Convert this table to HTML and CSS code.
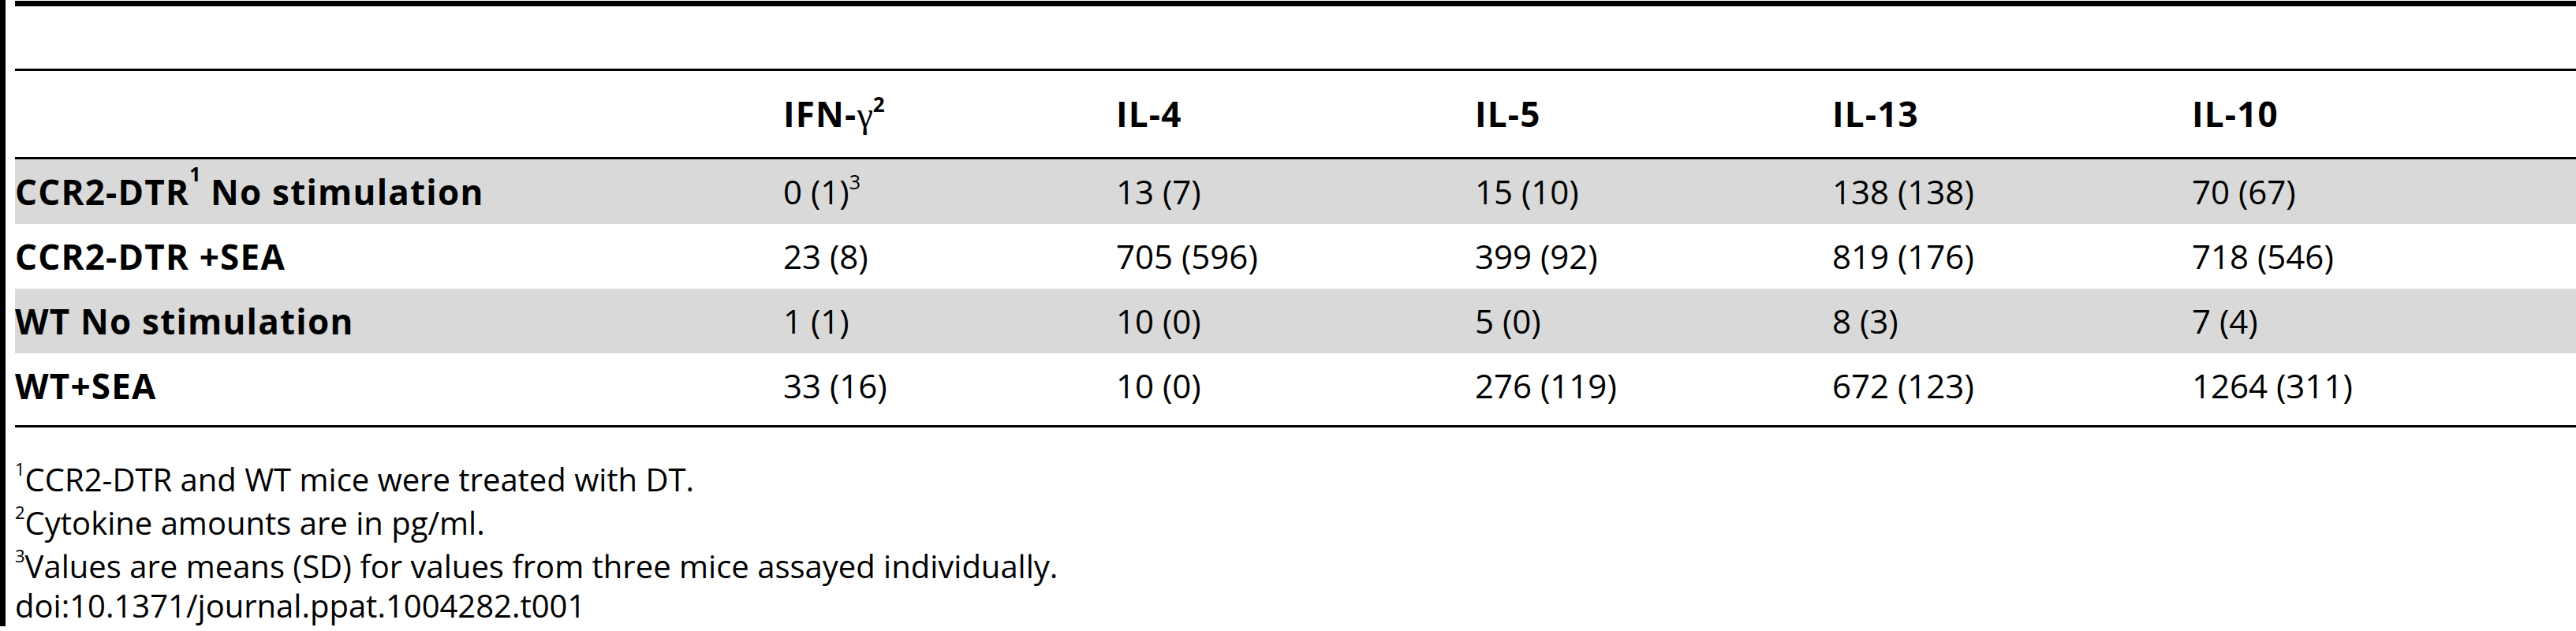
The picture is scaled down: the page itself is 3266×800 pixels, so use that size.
FILE: index.html
```html
<!DOCTYPE html>
<html lang="en">
<head>
<meta charset="utf-8">
<title>Table 1</title>
<link rel="stylesheet" href="styles.css">
</head>
<body>
<div class="frame">
  <div class="sheet">
    <div class="rule-top"></div>
    <div class="table">
      <div class="row head">
        <div class="cell"></div>
        <div class="cell">IFN-<span class="greek">γ</span><sup class="sup-head">2</sup></div>
        <div class="cell">IL-4</div>
        <div class="cell">IL-5</div>
        <div class="cell">IL-13</div>
        <div class="cell">IL-10</div>
      </div>
      <div class="row shade">
        <div class="cell lbl">CCR2-DTR<sup class="sup-lbl">1</sup> No stimulation</div>
        <div class="cell">0 (1)<sup class="sup-val">3</sup></div>
        <div class="cell">13 (7)</div>
        <div class="cell">15 (10)</div>
        <div class="cell">138 (138)</div>
        <div class="cell">70 (67)</div>
      </div>
      <div class="row">
        <div class="cell lbl">CCR2-DTR +SEA</div>
        <div class="cell">23 (8)</div>
        <div class="cell">705 (596)</div>
        <div class="cell">399 (92)</div>
        <div class="cell">819 (176)</div>
        <div class="cell">718 (546)</div>
      </div>
      <div class="row shade">
        <div class="cell lbl">WT No stimulation</div>
        <div class="cell">1 (1)</div>
        <div class="cell">10 (0)</div>
        <div class="cell">5 (0)</div>
        <div class="cell">8 (3)</div>
        <div class="cell">7 (4)</div>
      </div>
      <div class="row">
        <div class="cell lbl">WT+SEA</div>
        <div class="cell">33 (16)</div>
        <div class="cell">10 (0)</div>
        <div class="cell">276 (119)</div>
        <div class="cell">672 (123)</div>
        <div class="cell">1264 (311)</div>
      </div>
    </div>
    <div class="notes">
      <p class="note"><sup class="sup-note">1</sup>CCR2-DTR and WT mice were treated with DT.</p>
      <p class="note"><sup class="sup-note">2</sup>Cytokine amounts are in pg/ml.</p>
      <p class="note"><sup class="sup-note">3</sup>Values are means (SD) for values from three mice assayed individually.</p>
      <p class="note doi">doi:10.1371/journal.ppat.1004282.t001</p>
    </div>
  </div>
</div>
</body>
</html>
```

FILE: styles.css
```css
html, body {
  margin: 0;
  padding: 0;
  background: #ffffff;
}

body {
  font-family: "Open Sans", "Noto Sans", "DejaVu Sans", sans-serif;
  color: #000000;
  width: 3266px;
}

.frame {
  display: flex;
  box-sizing: border-box;
  height: 794px;
  border-left: 7px solid #000000;
  padding-left: 12px;
}

.sheet {
  flex: 1;
  min-width: 0;
}

.rule-top {
  height: 7px;
  margin-top: 1px;
  background: #000000;
}

.table {
  margin-top: 79px;
  border-top: 3px solid #000000;
  border-bottom: 3px solid #000000;
  padding-bottom: 9px;
}

.row {
  display: grid;
  grid-template-columns: 974px 422px 455px 453px 456px 1fr;
  height: 82px;
  font-size: 42px;
  line-height: 82px;
  white-space: nowrap;
}

.row.head {
  height: 109px;
  line-height: 109px;
  font-weight: 700;
  font-size: 44px;
  letter-spacing: 1.2px;
  border-bottom: 3px solid #000000;
}

.row.shade {
  background: #d9d9d9;
}

.lbl {
  font-weight: 700;
  font-size: 44px;
  letter-spacing: 1.2px;
}

.greek {
  font-family: "Liberation Serif", "DejaVu Serif", serif;
  font-weight: 400;
  font-size: 46px;
  letter-spacing: 0;
}

sup {
  line-height: 0;
  letter-spacing: 0;
}

.sup-head {
  font-size: 26px;
  vertical-align: 19px;
  font-weight: 700;
}

.sup-lbl {
  font-size: 25px;
  vertical-align: 30px;
}

.sup-val {
  font-size: 25px;
  vertical-align: 19px;
}

.notes {
  margin-top: 38px;
}

.note {
  margin: 0;
  font-size: 40px;
  line-height: 55px;
  white-space: nowrap;
}

.note.doi {
  line-height: 45px;
}

.sup-note {
  font-size: 22px;
  vertical-align: 20px;
}
```
